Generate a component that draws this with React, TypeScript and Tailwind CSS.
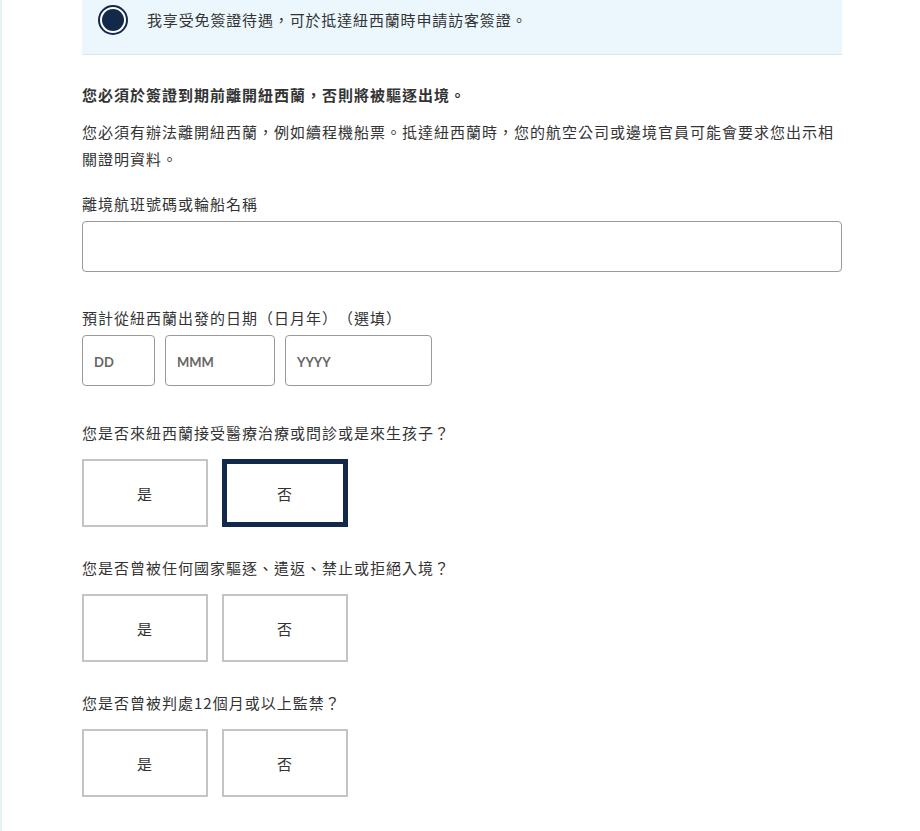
import React from "react";

const font = { fontFamily: '"Noto Sans CJK TC", "Noto Sans", sans-serif' };

function YesNo({ selected }: { selected?: "yes" | "no" }) {
  const base = "w-[126px] h-[68px] flex items-center justify-center bg-white text-[15px] text-[#333]";
  const off = "border-2 border-[#c4c4c4]";
  const on = "border-[5px] border-[#12294a]";
  return (
    <div className="flex gap-[14px] mt-[13px]">
      <button className={`${base} ${selected === "yes" ? on : off}`} style={font}>是</button>
      <button className={`${base} ${selected === "no" ? on : off}`} style={font}>否</button>
    </div>
  );
}

const Open = () => <span className="inline-block w-[16px] text-right">（</span>;
const Close = () => <span className="inline-block w-[16px] text-left">）</span>;

export default function App() {
  return (
    <div className="min-h-[831px] bg-white border-l-2 border-[#e3f4f2]" style={font}>
      <div className="pl-[80px] w-[840px] text-[#333] text-[15px] leading-[27px] tracking-[1px]">
        <div className="h-[55px] bg-[#ebf7fd] border-b border-[#dfe6ea] flex items-start pt-[5px] pl-[16px]">
          <span className="w-[30px] h-[30px] rounded-full border-2 border-[#12294a] bg-white flex items-center justify-center shrink-0">
            <span className="w-[22px] h-[22px] rounded-full bg-[#12294a]" />
          </span>
          <span className="ml-[19px] mt-[1px] tracking-[0.85px]">我享受免簽證待遇，可於抵達紐西蘭時申請訪客簽證。</span>
        </div>

        <p className="mt-[26px] font-bold">您必須於簽證到期前離開紐西蘭，否則將被驅逐出境。</p>
        <p className="mt-[10px]">您必須有辦法離開紐西蘭，例如續程機船票。抵達紐西蘭時，您的航空公司或邊境官員可能會要求您出示相關證明資料。</p>

        <label className="block mt-[18px]">離境航班號碼或輪船名稱</label>
        <input className="block mt-[4px] w-[760px] h-[51px] border border-[#9a9a9a] rounded-[4px] bg-white outline-none" />

        <label className="block mt-[32px]">
          預計從紐西蘭出發的日期<Open />日月年<Close /><Open />選填<Close />
        </label>
        <div className="flex gap-[10px] mt-[4px]">
          {[
            { w: "w-[73px]", t: "DD" },
            { w: "w-[110px]", t: "MMM" },
            { w: "w-[147px]", t: "YYYY" },
          ].map((d) => (
            <div
              key={d.t}
              className={`${d.w} h-[51px] border border-[#9a9a9a] rounded-[4px] flex items-center pl-[11px] pt-[3px] text-[13px] font-bold text-[#666] tracking-normal`}
              style={{ fontFamily: '"Lato", "Open Sans", sans-serif' }}
            >
              {d.t}
            </div>
          ))}
        </div>

        <p className="mt-[33px]">您是否來紐西蘭接受醫療治療或問診或是來生孩子？</p>
        <YesNo selected="no" />

        <p className="mt-[27px]">您是否曾被任何國家驅逐、遣返、禁止或拒絕入境？</p>
        <YesNo />

        <p className="mt-[27px]">您是否曾被判處12個月或以上監禁？</p>
        <YesNo />
      </div>
    </div>
  );
}
